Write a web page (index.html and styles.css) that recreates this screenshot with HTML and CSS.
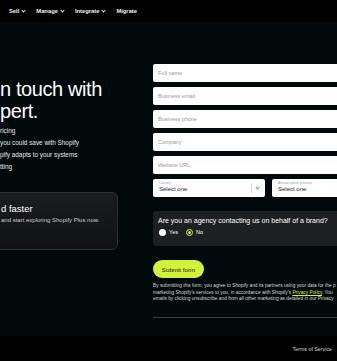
FILE: index.html
```html
<!DOCTYPE html>
<html lang="en">
<head>
    <meta charset="UTF-8">
    <meta name="viewport" content="width=device-width, initial-scale=1.0">
    <title>Shopify Plus - Contact sales</title>
    <link rel="stylesheet" href="styles.css">
</head>
<body>

    <header class="topnav">
        <nav class="topnav-links">
            <a href="#" class="topnav-item">Sell <span class="caret"></span></a>
            <a href="#" class="topnav-item">Manage <span class="caret"></span></a>
            <a href="#" class="topnav-item">Integrate <span class="caret"></span></a>
            <a href="#" class="topnav-item">Migrate</a>
        </nav>
    </header>

    <main class="contact">
        <section class="intro">
            <h1 class="intro-title">n touch with<br>pert.</h1>
            <ul class="intro-points">
                <li>ricing</li>
                <li>you could save with Shopify</li>
                <li>pify adapts to your systems</li>
                <li>tting</li>
            </ul>
            <div class="promo-card">
                <div class="promo-title">d faster</div>
                <div class="promo-text">and start exploring Shopify Plus now.</div>
            </div>
        </section>

        <!-- Lead form -->
        <form class="lead-form">
            <input class="field" type="text" placeholder="Full name">
            <input class="field" type="email" placeholder="Business email">
            <input class="field" type="tel" placeholder="Business phone">
            <input class="field" type="text" placeholder="Company">
            <input class="field" type="text" placeholder="Website URL">

            <div class="select-row">
                <div class="select-box">
                    <span class="select-label">Country</span>
                    <span class="select-value">Select one</span>
                    <span class="select-divider"></span>
                    <span class="select-caret"></span>
                </div>
                <div class="select-box">
                    <span class="select-label">Annual online revenue</span>
                    <span class="select-value">Select one</span>
                </div>
            </div>

            <div class="agency-box">
                <p class="agency-question">Are you an agency contacting us on behalf of a brand?</p>
                <div class="agency-options">
                    <label class="option"><span class="radio"></span>Yes</label>
                    <label class="option"><span class="radio radio-checked"></span>No</label>
                </div>
            </div>

            <button class="submit-btn" type="button">Submit form</button>

            <p class="legal">
                By submitting this form, you agree to Shopify and its partners using your data for the p<br>
                marketing Shopify's services to you, in accordance with Shopify's <a href="#">Privacy Policy</a>. You<br>
                emails by clicking unsubscribe and from all other marketing as detailed in our Privacy
            </p>

            <hr class="form-rule">
        </form>
    </main>

    <footer class="site-footer">
        <a href="#">Terms of Service</a>
    </footer>

</body>
</html>
```

FILE: styles.css
```css
body {
    margin: 0;
    width: 337px;
    height: 361px;
    overflow: hidden;
    background-color: #000;
    color: #fff;
    font-family: "Liberation Sans", Arial, sans-serif;
}

a {
    color: inherit;
    text-decoration: none;
}

/* Thanh menu trên cùng */
.topnav {
    height: 22px;
    background-color: #000;
    display: flex;
    align-items: center;
}

.topnav-links {
    display: flex;
    gap: 11px;
    padding-left: 9px;
}

.topnav-item {
    display: flex;
    align-items: center;
    gap: 3px;
    font-size: 5.8px;
    font-weight: bold;
    color: #f2f2f2;
}

.caret {
    width: 2px;
    height: 2px;
    border-right: 1px solid #e6e6e6;
    border-bottom: 1px solid #e6e6e6;
    transform: rotate(45deg);
    margin-top: -2px;
}

/* Khu vực chính */
.contact {
    display: flex;
    height: 314px;
    background-color: #02090a;
}

.intro {
    width: 153px;
    flex-shrink: 0;
}

.intro-title {
    margin: 56px 0 0;
    font-size: 20px;
    line-height: 22px;
    font-weight: normal;
    letter-spacing: -0.4px;
    color: #fff;
}

.intro-points {
    list-style: none;
    margin: 3px 0 0;
    padding: 0;
    font-size: 6.4px;
    line-height: 12px;
    color: #e8e8e8;
}

.promo-card {
    margin: 19px 0 0 -12px;
    width: 116px;
    height: 56px;
    padding-left: 12px;
    border: 1px solid #2c3032;
    border-radius: 6px;
    background: linear-gradient(180deg, #1a1d1f 0%, #0e1213 100%);
}

.promo-title {
    margin-top: 10px;
    font-size: 9.5px;
    line-height: 12px;
    color: #fff;
}

.promo-text {
    margin-top: 1px;
    font-size: 6px;
    line-height: 8px;
    color: #c9cccd;
}

/* Form */
.lead-form {
    width: 231px;
    flex-shrink: 0;
    margin-top: 42px;
    display: flex;
    flex-direction: column;
    gap: 5px;
}

.field {
    box-sizing: border-box;
    height: 18px;
    margin: 0;
    padding: 0 0 0 5px;
    border: none;
    border-radius: 2px;
    background-color: #fff;
    font-family: inherit;
    font-size: 5.5px;
    color: #222;
}

.field::placeholder {
    color: #9a9a9a;
}

.select-row {
    display: flex;
    gap: 7px;
}

.select-box {
    position: relative;
    flex: 1;
    box-sizing: border-box;
    height: 18px;
    padding: 2px 0 0 6px;
    border-radius: 2px;
    background-color: #fff;
    display: flex;
    flex-direction: column;
}

.select-label {
    font-size: 3.4px;
    line-height: 4px;
    color: #9a9a9a;
}

.select-value {
    font-size: 6px;
    line-height: 8px;
    color: #1e1e1e;
}

.select-divider {
    position: absolute;
    top: 4px;
    right: 13px;
    width: 1px;
    height: 10px;
    background-color: #d6d6d6;
}

.select-caret {
    position: absolute;
    top: 7px;
    right: 6px;
    width: 2px;
    height: 2px;
    border-right: 1px solid #8a8a8a;
    border-bottom: 1px solid #8a8a8a;
    transform: rotate(45deg);
}

.agency-box {
    margin-top: 9px;
    height: 35px;
    box-sizing: border-box;
    padding: 5px 0 0 5px;
    border-radius: 4px;
    background-color: #1c2022;
}

.agency-question {
    margin: 0;
    font-size: 7px;
    line-height: 10px;
    color: #fff;
}

.agency-options {
    display: flex;
    gap: 8px;
    margin-top: 2px;
    margin-left: 1px;
}

.option {
    display: flex;
    align-items: center;
    gap: 3px;
    font-size: 5.5px;
    line-height: 9px;
    color: #fff;
}

.radio {
    width: 7px;
    height: 7px;
    box-sizing: border-box;
    border-radius: 50%;
    background-color: #fff;
}

.radio-checked {
    background-color: #0b0f10;
    border: 1.5px solid #d2f13a;
    box-shadow: inset 0 0 0 1px #0b0f10, inset 0 0 0 3px #d2f13a;
}

.submit-btn {
    align-self: flex-start;
    margin-top: 9px;
    width: 51px;
    height: 18px;
    padding: 0;
    border: none;
    border-radius: 9px;
    background-color: #d2f13a;
    font-family: inherit;
    font-size: 6.2px;
    color: #111;
    cursor: pointer;
}

.legal {
    margin: 0;
    font-size: 4.8px;
    line-height: 6.5px;
    color: #d4d6d6;
    white-space: nowrap;
}

.legal a {
    color: #d2f13a;
    text-decoration: underline;
}

.form-rule {
    margin: 9px 0 0;
    border: none;
    height: 1px;
    background-color: #3b3f41;
}

/* Chân trang */
.site-footer {
    height: 25px;
    display: flex;
    align-items: center;
    justify-content: flex-end;
    padding-right: 5px;
    font-size: 5.3px;
    color: #d8d8d8;
}
```
